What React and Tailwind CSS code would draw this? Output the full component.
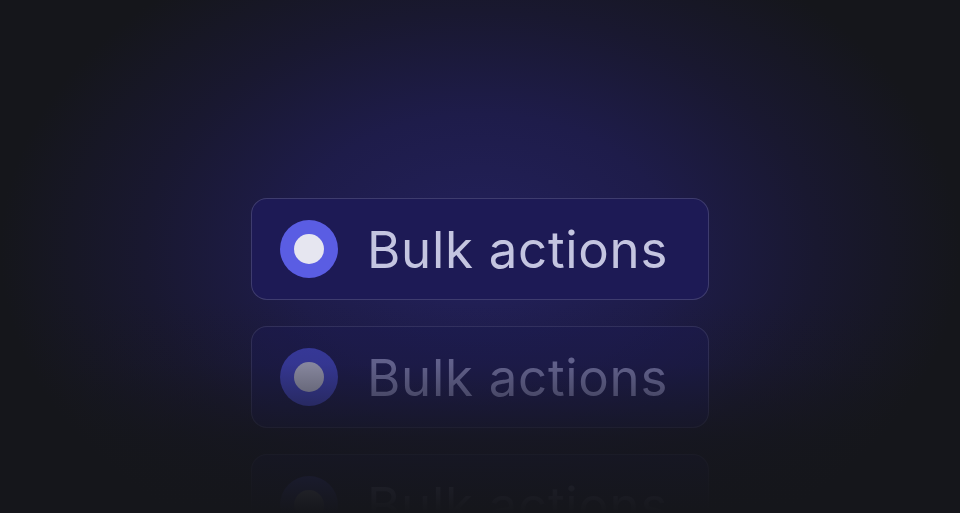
const items = [
  { key: 'main', faded: false },
  { key: 'echo-1', faded: true },
  { key: 'echo-2', faded: true },
];

function BulkButton({ faded }) {
  return (
    <div
      className={`flex items-center w-[458px] h-[102px] shrink-0 rounded-[16px] border pl-[28px] ${
        faded ? 'border-white/10 bg-[#1d1a52]/60' : 'border-white/15 bg-[#1d1a55]'
      }`}
    >
      <div
        className={`flex items-center justify-center w-[58px] h-[58px] rounded-full ${
          faded ? 'bg-[#3a3ca6]' : 'bg-[#5a5de3]'
        }`}
      >
        <div className={`w-[30px] h-[30px] rounded-full ${faded ? 'bg-[#9a9ab4]' : 'bg-[#e6e6f0]'}`} />
      </div>
      <span
        className={`ml-[29px] text-[51px] leading-none tracking-[0.7px] ${
          faded ? 'text-[#6e6d9e]' : 'text-[#c4c5e0]'
        }`}
        style={{ fontFamily: 'Inter, "Liberation Sans", sans-serif' }}
      >
        Bulk actions
      </span>
    </div>
  );
}

export default function App() {
  return (
    <div className="relative w-[960px] h-[513px] overflow-hidden bg-[radial-gradient(ellipse_480px_340px_at_480px_250px,#23215c_0%,#1e1c4a_40%,#191830_70%,#15161b_100%)]">
      <div className="flex flex-col items-center gap-[26px] pt-[198px]">
        {items.map((item) => (
          <BulkButton key={item.key} faded={item.faded} />
        ))}
      </div>
      {/* fade-out over the reflections */}
      <div className="pointer-events-none absolute inset-x-0 top-[300px] bottom-0 bg-[linear-gradient(to_bottom,rgba(21,22,27,0)_0%,rgba(21,22,27,0.15)_30%,rgba(21,22,27,0.75)_65%,#15161b_100%)]" />
    </div>
  );
}
